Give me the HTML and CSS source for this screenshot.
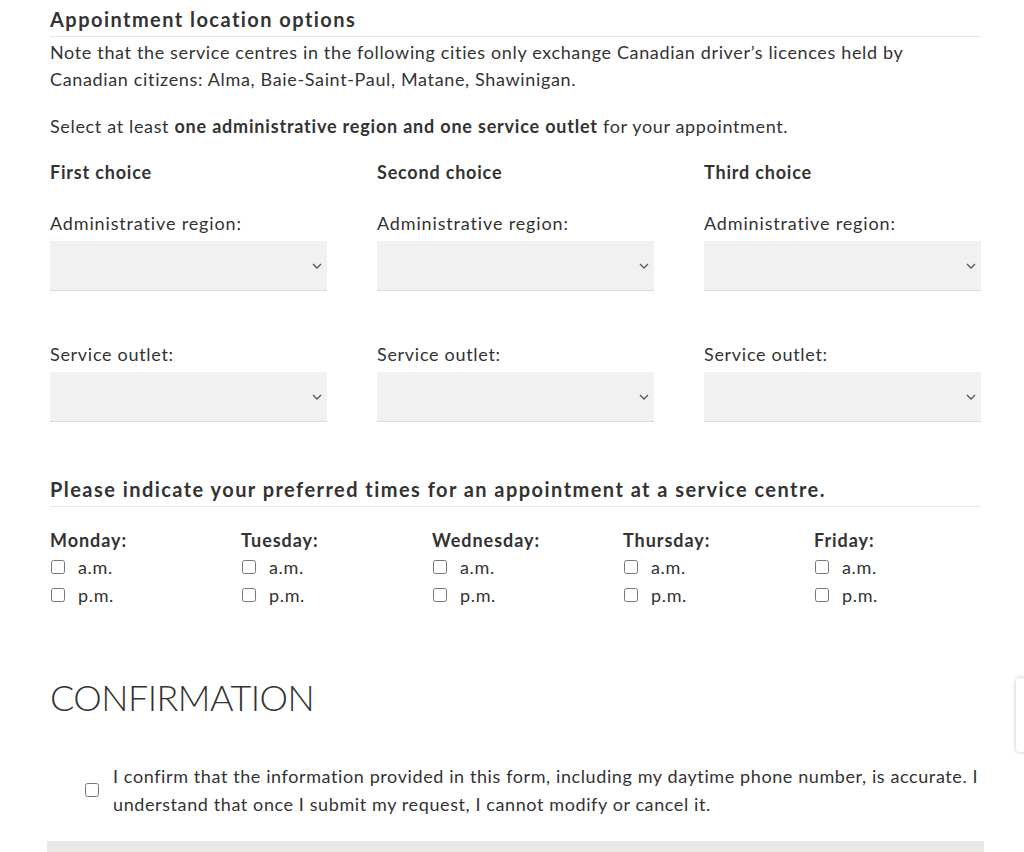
FILE: index.html
```html
<!DOCTYPE html>
<html lang="en">
<head>
<meta charset="utf-8">
<title>Appointment location options</title>
<link rel="stylesheet" href="styles.css">
</head>
<body>
<main class="page">
  <section class="section">
    <h3 class="section-title">Appointment location options</h3>
    <p class="note">Note that the service centres in the following cities only exchange Canadian driver’s licences held by Canadian citizens: Alma, Baie-Saint-Paul, Matane, Shawinigan.</p>
    <p class="instruction">Select at least <strong>one administrative region and one service outlet</strong> for your appointment.</p>

    <div class="choices">
      <div class="choice">
        <div class="choice-title">First choice</div>
        <label class="field-label">Administrative region:</label>
        <div class="select-wrap">
          <select class="select"><option></option></select>
          <svg class="chev" width="10" height="6" viewBox="0 0 10 6"><path d="M1 1l4 4 4-4" fill="none" stroke="#555" stroke-width="1.3"/></svg>
        </div>
        <label class="field-label field-label--outlet">Service outlet:</label>
        <div class="select-wrap">
          <select class="select"><option></option></select>
          <svg class="chev" width="10" height="6" viewBox="0 0 10 6"><path d="M1 1l4 4 4-4" fill="none" stroke="#555" stroke-width="1.3"/></svg>
        </div>
      </div>
      <div class="choice">
        <div class="choice-title">Second choice</div>
        <label class="field-label">Administrative region:</label>
        <div class="select-wrap">
          <select class="select"><option></option></select>
          <svg class="chev" width="10" height="6" viewBox="0 0 10 6"><path d="M1 1l4 4 4-4" fill="none" stroke="#555" stroke-width="1.3"/></svg>
        </div>
        <label class="field-label field-label--outlet">Service outlet:</label>
        <div class="select-wrap">
          <select class="select"><option></option></select>
          <svg class="chev" width="10" height="6" viewBox="0 0 10 6"><path d="M1 1l4 4 4-4" fill="none" stroke="#555" stroke-width="1.3"/></svg>
        </div>
      </div>
      <div class="choice">
        <div class="choice-title">Third choice</div>
        <label class="field-label">Administrative region:</label>
        <div class="select-wrap">
          <select class="select"><option></option></select>
          <svg class="chev" width="10" height="6" viewBox="0 0 10 6"><path d="M1 1l4 4 4-4" fill="none" stroke="#555" stroke-width="1.3"/></svg>
        </div>
        <label class="field-label field-label--outlet">Service outlet:</label>
        <div class="select-wrap">
          <select class="select"><option></option></select>
          <svg class="chev" width="10" height="6" viewBox="0 0 10 6"><path d="M1 1l4 4 4-4" fill="none" stroke="#555" stroke-width="1.3"/></svg>
        </div>
      </div>
    </div>
  </section>

  <section class="section section--times">
    <h3 class="section-title">Please indicate your preferred times for an appointment at a service centre.</h3>
    <div class="days">
      <div class="day">
        <div class="day-name">Monday:</div>
        <label class="check"><input type="checkbox" class="cb">a.m.</label>
        <label class="check"><input type="checkbox" class="cb">p.m.</label>
      </div>
      <div class="day">
        <div class="day-name">Tuesday:</div>
        <label class="check"><input type="checkbox" class="cb">a.m.</label>
        <label class="check"><input type="checkbox" class="cb">p.m.</label>
      </div>
      <div class="day">
        <div class="day-name">Wednesday:</div>
        <label class="check"><input type="checkbox" class="cb">a.m.</label>
        <label class="check"><input type="checkbox" class="cb">p.m.</label>
      </div>
      <div class="day">
        <div class="day-name">Thursday:</div>
        <label class="check"><input type="checkbox" class="cb">a.m.</label>
        <label class="check"><input type="checkbox" class="cb">p.m.</label>
      </div>
      <div class="day">
        <div class="day-name">Friday:</div>
        <label class="check"><input type="checkbox" class="cb">a.m.</label>
        <label class="check"><input type="checkbox" class="cb">p.m.</label>
      </div>
    </div>
  </section>

  <section class="section section--confirm">
    <h2 class="confirm-title">CONFIRMATION</h2>
    <label class="confirm">
      <input type="checkbox" class="cb cb--confirm">
      <span class="confirm-text">I confirm that the information provided in this form, including my daytime phone number, is accurate. I understand that once I submit my request, I cannot modify or cancel it.</span>
    </label>
  </section>

  <div class="actions"></div>
</main>
<div class="side-tab"></div>
</body>
</html>
```

FILE: styles.css
```css
* { box-sizing: border-box; }

html, body {
  margin: 0;
  padding: 0;
  background: #ffffff;
}

body {
  font-family: Lato, "Open Sans", "Liberation Sans", sans-serif;
  font-size: 18px;
  line-height: 27px;
  letter-spacing: 0.65px;
  color: #333333;
}

.page {
  width: 931px;
  margin-left: 50px;
  padding-top: 7px;
}

.section-title {
  margin: 0;
  font-size: 20px;
  line-height: 24px;
  font-weight: 700;
  letter-spacing: 1.45px;
  color: #333333;
  padding-bottom: 5px;
  border-bottom: 1px solid #e6e6e6;
}

.note {
  margin: 2px 0 0;
}

.instruction {
  margin: 20px 0 0;
}

.instruction strong {
  font-weight: 700;
  letter-spacing: 0.8px;
}

.choices {
  display: grid;
  grid-template-columns: repeat(3, 277px);
  column-gap: 50px;
  margin-top: 19px;
}

.choice {
  display: flex;
  flex-direction: column;
}

.choice-title {
  font-weight: 700;
  letter-spacing: 0.8px;
}

.field-label {
  margin-top: 24px;
  letter-spacing: 0.85px;
}

.field-label--outlet {
  margin-top: 50px;
  letter-spacing: 0.7px;
}

.select-wrap {
  position: relative;
  margin-top: 4px;
  height: 50px;
}

.select {
  appearance: none;
  -webkit-appearance: none;
  display: block;
  width: 100%;
  height: 50px;
  border: 0;
  border-bottom: 1px solid #dcdcdc;
  border-radius: 0;
  background: #f1f1f1;
  font-family: inherit;
  font-size: 18px;
  color: #333;
  padding: 0 30px 0 12px;
  margin: 0;
}

.chev {
  position: absolute;
  right: 5px;
  top: 22px;
  pointer-events: none;
}

.section--times {
  margin-top: 55px;
}

.days {
  display: grid;
  grid-template-columns: repeat(5, 167px);
  column-gap: 24px;
  margin-top: 20px;
}

.day-name {
  font-weight: 700;
  letter-spacing: 0.95px;
}

.check {
  display: flex;
  align-items: center;
  height: 28px;
  margin-top: -1px;
}

.check + .check {
  margin-top: 0;
}

.cb {
  width: 14px;
  height: 14px;
  margin: 0 13px 0 1px;
  flex: none;
}

.section--confirm {
  margin-top: 66px;
}

.confirm-title {
  margin: 0;
  font-size: 36px;
  line-height: 44px;
  font-weight: 300;
  letter-spacing: -0.55px;
  color: #333333;
}

.confirm {
  display: flex;
  align-items: center;
  margin-top: 43px;
  margin-right: -12px;
  padding-left: 35px;
  line-height: 28px;
  letter-spacing: 0.6px;
}

.cb--confirm {
  margin: 0 14px 0 0;
}

.actions {
  margin-top: 23px;
  margin-left: -3px;
  width: 937px;
  height: 60px;
  background: #e9e8e4;
}

.side-tab {
  position: fixed;
  right: -30px;
  top: 678px;
  width: 38px;
  height: 74px;
  background: #ffffff;
  border-radius: 4px;
  box-shadow: 0 0 4px rgba(0, 0, 0, 0.25);
}
```
